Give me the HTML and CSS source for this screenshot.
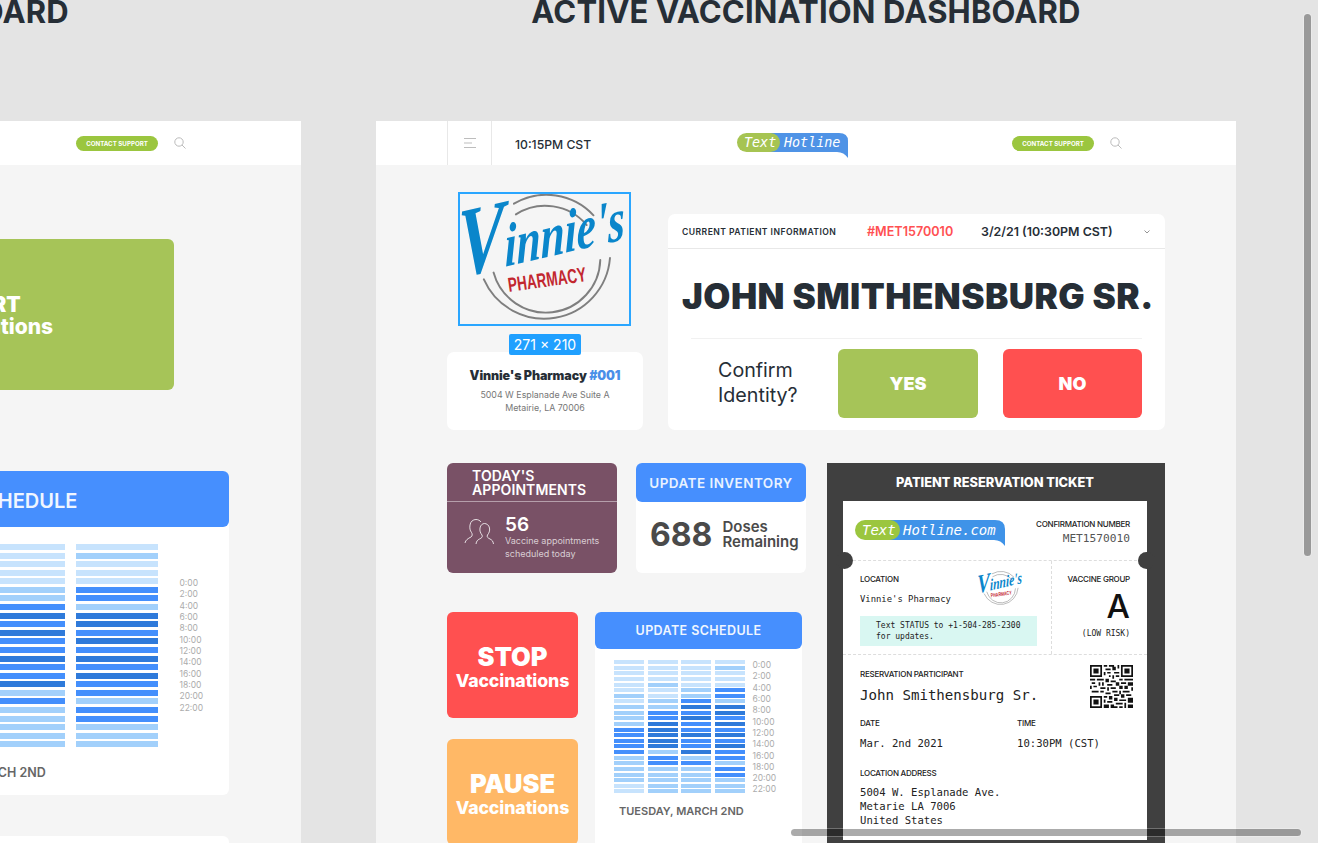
FILE: index.html
```html
<!DOCTYPE html>
<html lang="en">
<head>
<meta charset="utf-8">
<title>Vaccination Dashboards</title>
<link rel="stylesheet" href="styles.css">
</head>
<body>
<svg class="defs" width="0" height="0" aria-hidden="true">
  <symbol id="vinnie" viewBox="0 0 173 134">
    <g fill="none" stroke="#7f7f7f" stroke-width="2" stroke-linecap="round">
      <path d="M55 10A66 66 0 0 1 137 22"/>
      <path d="M57 21A56 56 0 0 1 130 32"/>
      <path d="M24 88A68 68 0 0 0 154 66"/>
      <path d="M34 81A56 56 0 0 0 144 68"/>
    </g>
    <text class="logo-script" transform="translate(-2 86) rotate(-13) skewX(-12)" textLength="176" lengthAdjust="spacingAndGlyphs"><tspan font-size="100">V</tspan>innie's</text>
    <text class="logo-pharm" transform="translate(50 101) rotate(-8)" textLength="81" lengthAdjust="spacingAndGlyphs">PHARMACY</text>
  </symbol>
</svg>

<main class="canvas">
  <section class="board board-left">
    <h1 class="board-title">SCHEDULED DASHBOARD</h1>
    <div class="artboard">
      <header class="topbar topbar-end">
        <span class="support">CONTACT SUPPORT</span>
        <svg class="search" viewBox="0 0 12 12"><circle cx="5" cy="5" r="4.2"/><path d="M8 8l3.500 3.500"/></svg>
      </header>
      <div class="left-hero"><p class="left-hero-text">START<br><span>Vaccinations</span></p></div>
      <div class="schedule schedule-left">
        <h2 class="schedule-head schedule-head-left">UPDATE SCHEDULE</h2>
        <div class="schedule-body">
          <div class="heat heat-left">
            <i class="h0"></i><i class="h0"></i><i class="h0"></i><i class="h1"></i><i class="h0"></i><i class="h0"></i><i class="h0"></i><i class="h0"></i><i class="h0"></i><i class="h0"></i>
            <i class="h1"></i><i class="h2"></i><i class="h1"></i><i class="h2"></i><i class="h2"></i><i class="h1"></i><i class="h3"></i><i class="h3"></i><i class="h2"></i><i class="h3"></i>
            <i class="h3"></i><i class="h2"></i><i class="h2"></i><i class="h3"></i><i class="h2"></i><i class="h2"></i><i class="h3"></i><i class="h3"></i><i class="h2"></i><i class="h2"></i>
            <i class="h2"></i><i class="h3"></i><i class="h3"></i><i class="h2"></i><i class="h1"></i><i class="h2"></i><i class="h2"></i><i class="h1"></i><i class="h1"></i><i class="h2"></i>
            <i class="h1"></i><i class="h2"></i><i class="h1"></i><i class="h1"></i><i class="h1"></i><i class="h1"></i><i class="h1"></i><i class="h1"></i>
          </div>
          <div class="times times-left">
            <span>0:00</span><span>2:00</span><span>4:00</span><span>6:00</span><span>8:00</span><span>10:00</span><span>12:00</span><span>14:00</span><span>16:00</span><span>18:00</span><span>20:00</span><span>22:00</span>
          </div>
        </div>
        <p class="schedule-date schedule-date-left">TUESDAY, MARCH 2ND</p>
      </div>
      <div class="left-next"></div>
    </div>
  </section>

  <section class="board board-right">
    <h1 class="board-title">ACTIVE VACCINATION DASHBOARD</h1>
    <div class="artboard">
      <header class="topbar">
        <div class="menu-cell">
          <svg class="menu" viewBox="0 0 12 10"><path d="M0 .5h12M0 5h8M0 9.500h12"/></svg>
        </div>
        <span class="clock">10:15PM CST</span>
        <svg class="brand" viewBox="0 0 111 25">
          <path class="brand-blue" d="M20 0H102Q111 0 111 8V25Q107 19 100 19H20Z"/>
          <rect class="brand-green" width="43" height="19" rx="9.500"/>
          <text class="brand-text" x="7" y="14">Text</text>
          <text class="brand-text" x="47" y="14">Hotline</text>
        </svg>
        <span class="support support-right">CONTACT SUPPORT</span>
        <svg class="search" viewBox="0 0 12 12"><circle cx="5" cy="5" r="4.2"/><path d="M8 8l3.500 3.500"/></svg>
      </header>

      <div class="content">
        <div class="row-top">
          <div class="pharmacy">
            <div class="selection">
              <svg class="selection-logo"><use href="#vinnie"/></svg>
              <span class="size-tag">271 × 210</span>
            </div>
            <div class="pharmacy-card">
              <p class="pharmacy-name">Vinnie's Pharmacy <b>#001</b></p>
              <p class="pharmacy-address">5004 W Esplanade Ave Suite A<br>Metairie, LA 70006</p>
            </div>
          </div>

          <div class="patient">
            <div class="patient-bar">
              <span class="patient-label">CURRENT PATIENT INFORMATION</span>
              <span class="patient-id">#MET1570010</span>
              <span class="patient-date">3/2/21 (10:30PM CST)</span>
              <svg class="chevron" viewBox="0 0 6 4"><path d="M.5 .5L3 3L5.500 .5"/></svg>
            </div>
            <h2 class="patient-name">JOHN SMITHENSBURG SR.</h2>
            <div class="confirm">
              <p class="confirm-text">Confirm<br>Identity?</p>
              <button class="answer answer-yes">YES</button>
              <button class="answer answer-no">NO</button>
            </div>
          </div>
        </div>

        <div class="row-bottom">
          <div class="col-left">
            <div class="stats">
              <div class="appts">
                <h3 class="appts-title">TODAY'S<br>APPOINTMENTS</h3>
                <div class="appts-body">
                  <svg class="people" viewBox="0 0 30 27">
                    <path d="M1 25c.5-3 3-4.500 6-6 1.500-1 1.500-3 .5-4.500C6 12.500 5.500 10 6 7c.5-3.500 3-5.500 6-5.500 2 0 4 1 5 2.500"/>
                    <path d="M12 26c.5-3 1.500-4 3.500-5 2-1 3.500-2 2.500-4-1.500-2-2.500-4-2-7 .5-3 2.500-4.500 4.500-4.500s4.500 1.500 5 4.500c.5 3-.5 5-2 7-1 2 .5 3 2.500 4 2 1 3 2 3.500 5"/>
                  </svg>
                  <div>
                    <p class="appts-count">56</p>
                    <p class="appts-note">Vaccine appointments<br>scheduled today</p>
                  </div>
                </div>
              </div>
              <div class="inventory">
                <h3 class="inventory-head">UPDATE INVENTORY</h3>
                <div class="inventory-body">
                  <span class="inventory-count">688</span>
                  <span class="inventory-label">Doses<br>Remaining</span>
                </div>
              </div>
            </div>

            <div class="controls">
              <div class="actions">
                <div class="action action-stop"><strong>STOP</strong><span>Vaccinations</span></div>
                <div class="action action-pause"><strong>PAUSE</strong><span>Vaccinations</span></div>
              </div>
              <div class="schedule schedule-right">
                <h2 class="schedule-head">UPDATE SCHEDULE</h2>
                <div class="schedule-body schedule-body-right">
                  <div class="heat heat-right">
                    <i class="h0"></i><i class="h0"></i><i class="h0"></i><i class="h0"></i>
                    <i class="h0"></i><i class="h0"></i><i class="h0"></i><i class="h1"></i>
                    <i class="h0"></i><i class="h0"></i><i class="h0"></i><i class="h0"></i>
                    <i class="h0"></i><i class="h0"></i><i class="h0"></i><i class="h0"></i>
                    <i class="h0"></i><i class="h1"></i><i class="h0"></i><i class="h0"></i>
                    <i class="h0"></i><i class="h0"></i><i class="h1"></i><i class="h2"></i>
                    <i class="h1"></i><i class="h0"></i><i class="h1"></i><i class="h2"></i>
                    <i class="h0"></i><i class="h1"></i><i class="h2"></i><i class="h1"></i>
                    <i class="h1"></i><i class="h1"></i><i class="h3"></i><i class="h3"></i>
                    <i class="h1"></i><i class="h2"></i><i class="h2"></i><i class="h3"></i>
                    <i class="h1"></i><i class="h2"></i><i class="h3"></i><i class="h2"></i>
                    <i class="h1"></i><i class="h3"></i><i class="h2"></i><i class="h3"></i>
                    <i class="h2"></i><i class="h3"></i><i class="h2"></i><i class="h2"></i>
                    <i class="h2"></i><i class="h3"></i><i class="h3"></i><i class="h3"></i>
                    <i class="h2"></i><i class="h3"></i><i class="h2"></i><i class="h2"></i>
                    <i class="h2"></i><i class="h3"></i><i class="h2"></i><i class="h3"></i>
                    <i class="h2"></i><i class="h1"></i><i class="h3"></i><i class="h2"></i>
                    <i class="h1"></i><i class="h2"></i><i class="h1"></i><i class="h2"></i>
                    <i class="h1"></i><i class="h2"></i><i class="h2"></i><i class="h1"></i>
                    <i class="h1"></i><i class="h1"></i><i class="h1"></i><i class="h2"></i>
                    <i class="h1"></i><i class="h1"></i><i class="h1"></i><i class="h2"></i>
                    <i class="h1"></i><i class="h1"></i><i class="h1"></i><i class="h1"></i>
                    <i class="h0"></i><i class="h1"></i><i class="h1"></i><i class="h1"></i>
                    <i class="h0"></i><i class="h1"></i><i class="h1"></i><i class="h1"></i>
                  </div>
                  <div class="times">
                    <span>0:00</span><span>2:00</span><span>4:00</span><span>6:00</span><span>8:00</span><span>10:00</span><span>12:00</span><span>14:00</span><span>16:00</span><span>18:00</span><span>20:00</span><span>22:00</span>
                  </div>
                </div>
                <p class="schedule-date">TUESDAY, MARCH 2ND</p>
              </div>
            </div>
          </div>

          <div class="ticket">
            <h3 class="ticket-title">PATIENT RESERVATION TICKET</h3>
            <div class="stub">
              <i class="notch notch-l"></i><i class="notch notch-r"></i>
              <div class="stub-head">
                <svg class="stub-brand" viewBox="0 0 150 26">
                  <path class="stub-blue" d="M25 0H140Q150 0 150 9V26Q146 20 139 20H25Z"/>
                  <rect class="stub-green" width="45" height="20" rx="10"/>
                  <text class="stub-text" x="7" y="15">Text</text>
                  <text class="stub-text" x="48" y="15">Hotline.com</text>
                </svg>
                <div class="stub-conf">
                  <p class="tlabel">CONFIRMATION NUMBER</p>
                  <p class="tvalue tvalue-conf">MET1570010</p>
                </div>
              </div>
              <div class="stub-mid">
                <div class="stub-loc">
                  <svg class="stub-logo"><use href="#vinnie"/></svg>
                  <p class="tlabel">LOCATION</p>
                  <p class="tvalue tvalue-loc">Vinnie's Pharmacy</p>
                  <p class="stub-note">Text STATUS to +1-504-285-2300<br>for updates.</p>
                </div>
                <div class="stub-group">
                  <p class="tlabel">VACCINE GROUP</p>
                  <p class="group-letter">A</p>
                  <p class="group-risk">(LOW RISK)</p>
                </div>
              </div>
              <div class="stub-low">
                <svg class="qr" viewBox="0 0 25 25">
                  <path fill-rule="evenodd" d="M0 0h7v7h-7zM1 1v5h5v-5zM2 2h3v3h-3zM18 0h7v7h-7zM19 1v5h5v-5zM20 2h3v3h-3zM0 18h7v7h-7zM1 19v5h5v-5zM2 20h3v3h-3z"/>
                  <path d="M8 0h2v1h-2zM11 0h3v1h-3zM16 0h1v2h-1zM9 2h3v1h-3zM13 1h2v2h-2zM8 4h1v2h-1zM10 4h2v1h-2zM14 4h3v1h-3zM11 6h1v1h-1zM13 6h1v2h-1zM15 6h2v1h-2zM0 8h3v1h-3zM4 8h4v1h-4zM9 8h2v2h-2zM12 9h3v1h-3zM17 8h2v1h-2zM20 8h5v1h-5zM1 10h2v1h-2zM5 10h1v2h-1zM7 10h1v2h-1zM10 11h3v1h-3zM15 10h2v2h-2zM18 10h3v1h-3zM22 10h3v2h-3zM0 12h1v2h-1zM2 12h2v1h-2zM6 13h3v1h-3zM10 13h1v2h-1zM12 13h3v1h-3zM17 12h2v2h-2zM20 12h2v2h-2zM24 13h1v2h-1zM1 15h4v1h-4zM6 15h2v1h-2zM9 16h3v1h-3zM13 15h3v1h-3zM17 15h1v2h-1zM19 15h4v1h-4zM8 18h2v1h-2zM11 18h2v2h-2zM14 17h3v1h-3zM18 17h2v2h-2zM21 17h3v1h-3zM8 20h1v2h-1zM10 21h3v1h-3zM14 19h2v2h-2zM17 20h4v1h-4zM22 19h3v3h-3zM8 23h3v2h-3zM12 23h2v1h-2zM15 22h4v1h-4zM20 22h1v3h-1zM13 25h-1v-1h4v1zM17 24h2v1h-2zM22 23h3v2h-3z"/>
                </svg>
                <p class="tlabel">RESERVATION PARTICIPANT</p>
                <p class="tvalue tvalue-name">John Smithensburg Sr.</p>
                <div class="stub-when">
                  <div><p class="tlabel">DATE</p><p class="tvalue tvalue-mid">Mar. 2nd 2021</p></div>
                  <div><p class="tlabel">TIME</p><p class="tvalue tvalue-mid">10:30PM (CST)</p></div>
                </div>
                <p class="tlabel tlabel-address">LOCATION ADDRESS</p>
                <p class="tvalue tvalue-address">5004 W. Esplanade Ave.<br>Metarie LA 7006<br>United States</p>
              </div>
            </div>
          </div>
        </div>
      </div>
    </div>
  </section>

  <div class="scroll scroll-v"></div>
  <div class="scroll scroll-h"></div>
</main>
</body>
</html>
```

FILE: styles.css
```css
* { box-sizing: border-box; }
html, body { margin: 0; padding: 0; height: 100%; overflow: hidden; }
body { font-family: Inter, "Liberation Sans", sans-serif; color: #262e36; }
p, h1, h2, h3 { margin: 0; font-weight: inherit; }
.defs { position: absolute; }

.canvas { position: relative; width: 1318px; height: 843px; overflow: hidden; background: #e4e4e4; }
.board { position: absolute; top: 0; width: 860px; }
.board-left { left: -559px; }
.board-right { left: 376px; }
.board-title { height: 121px; line-height: 23px; font-size: 31px; font-weight: 700; text-align: center; letter-spacing: .15px; white-space: nowrap; color: #262e36; }
.artboard { height: 722px; background: #f5f5f5; overflow: hidden; }

.topbar { display: flex; align-items: center; height: 44px; padding-left: 71px; background: #fff; }
.topbar-end { justify-content: flex-end; padding-right: 115px; }
.menu-cell { display: flex; align-items: center; justify-content: center; width: 45px; height: 44px; border-left: 1px solid #e8e8e8; border-right: 1px solid #e8e8e8; }
.menu { width: 12px; height: 10px; fill: none; stroke: #bdbdbd; stroke-width: 1; }
.clock { margin: 2px 0 0 23px; width: 77px; font-size: 12.200px; font-weight: 500; white-space: nowrap; }
.brand { margin: 5px 0 0 145px; width: 111px; height: 25px; }
.brand-blue { fill: #4f93e6; }
.brand-green { fill: #a6c452; }
.brand-text { font: oblique 13.400px "DejaVu Sans Mono", monospace; fill: #fff; }
.support { display: block; width: 82px; height: 15px; line-height: 15px; border-radius: 8px; background: #9bc63f; color: #fff; font-size: 6.200px; font-weight: 700; text-align: center; white-space: nowrap; }
.support-right { margin-left: 164px; }
.search { width: 12px; height: 12px; margin-left: 16px; fill: none; stroke: #bbb; stroke-width: 1; }

.content { padding: 27px 71px 0; }
.row-top { display: flex; align-items: flex-end; gap: 25px; }
.pharmacy { width: 196px; }
.selection { position: relative; width: 173px; height: 134px; margin-left: 11px; border: 2px solid #2aa6ff; }
.selection-logo { display: block; width: 169px; height: 130px; }
.logo-script { font: italic 700 62px "Liberation Serif", serif; fill: #0a86cb; }
.logo-pharm { font: 700 21px "Liberation Sans", sans-serif; fill: #c2272f; }
.size-tag { position: absolute; left: 49px; top: 140px; z-index: 2; width: 72px; height: 21px; line-height: 21px; border-radius: 2px; background: #20a0ff; color: #fff; font-size: 14px; text-align: center; white-space: nowrap; }
.pharmacy-card { margin-top: 26px; height: 78px; padding-top: 16px; border-radius: 7px; background: #fff; text-align: center; }
.pharmacy-name { font-size: 12.500px; line-height: 15px; font-weight: 900; letter-spacing: -.1px; white-space: nowrap; }
.pharmacy-name b { color: #4a8fe8; font-weight: 900; }
.pharmacy-address { margin-top: 6px; font-size: 8.850px; line-height: 12.500px; color: #777; }

.patient { width: 497px; height: 216px; border-radius: 7px; background: #fff; }
.patient-bar { display: flex; align-items: center; height: 35px; padding: 1px 14px 0; border-bottom: 1px solid #e8e8e8; white-space: nowrap; }
.patient-label { width: 185px; font-size: 8.600px; font-weight: 600; letter-spacing: .45px; }
.patient-id { width: 114px; font-size: 12.600px; font-weight: 600; color: #ff5052; }
.patient-date { width: 160px; font-size: 12.400px; font-weight: 600; }
.chevron { width: 6px; height: 4px; margin-left: 3px; fill: none; stroke: #777; stroke-width: .8; }
.patient-name { height: 54px; margin: 25px 0 0 14px; font-size: 35px; line-height: 44px; font-weight: 900; white-space: nowrap; letter-spacing: .45px; }
.confirm { display: flex; align-items: stretch; margin: 10px 23px 0; padding-top: 10px; height: 80px; border-top: 1.500px solid #f1f1f1; }
.confirm-text { width: 147px; padding: 9px 0 0 27px; font-size: 19.700px; line-height: 25px; }
.answer { width: 140px; height: 69px; padding: 0; border: 0; border-radius: 6px; color: #fff; font: 900 18px Inter, sans-serif; }
.answer-yes { background: #a6c458; }
.answer-no { width: 139px; margin-left: 25px; background: #ff5050; }

.row-bottom { display: flex; gap: 21px; margin-top: 33px; }
.col-left { width: 359px; }
.stats { display: flex; gap: 19px; height: 110px; }
.appts { width: 170px; border-radius: 6px; background: #795166; color: #fff; }
.appts-title { height: 39px; padding: 6px 0 0 25px; border-bottom: 1px solid rgba(255,255,255,.45); font-size: 14px; line-height: 14px; font-weight: 600; letter-spacing: .1px; white-space: nowrap; }
.appts-body { display: flex; gap: 11px; padding: 12px 0 0 17px; }
.people { width: 30px; height: 27px; margin-top: 4px; fill: none; stroke: #fff; stroke-width: .8; flex: none; }
.appts-count { font-size: 19px; line-height: 21px; font-weight: 600; }
.appts-note { margin-top: 0; font-size: 9px; line-height: 12.500px; color: rgba(255,255,255,.72); white-space: nowrap; }
.inventory { width: 170px; border-radius: 6px; background: #fff; }
.inventory-head { height: 38.500px; padding-top: 1px; line-height: 38.500px; border-radius: 6px; background: #468ffe; color: #e9f2ff; font-size: 13.500px; font-weight: 600; text-align: center; letter-spacing: .45px; white-space: nowrap; }
.inventory-body { display: flex; align-items: center; gap: 10px; height: 66px; padding: 0 0 1px 14px; color: #4a4a4a; }
.inventory-count { font-size: 32px; font-weight: 700; }
.inventory-label { font-size: 15px; line-height: 15px; font-weight: 600; white-space: nowrap; }

.controls { display: flex; gap: 17px; margin-top: 39px; }
.actions { display: flex; flex-direction: column; gap: 21px; width: 131px; }
.action { display: flex; flex-direction: column; align-items: center; justify-content: center; height: 106px; padding-top: 5px; border-radius: 6px; color: #fff; }
.action strong { font-size: 25.500px; line-height: 28px; font-weight: 900; }
.action span { margin-top: -1px; font-size: 17.700px; line-height: 22px; font-weight: 800; letter-spacing: -.1px; white-space: nowrap; }
.action-stop { background: #ff5050; }
.action-pause { background: #ffb866; }

.schedule { border-radius: 6px; background: #fff; }
.schedule-right { width: 207px; height: 240px; }
.schedule-head { height: 37px; line-height: 37px; border-radius: 6px; background: #468ffe; color: #f0f6ff; font-size: 12.500px; font-weight: 600; text-align: center; letter-spacing: .4px; white-space: nowrap; }
.schedule-body { display: flex; }
.schedule-body-right { padding: 11px 0 0 19px; }
.heat { display: grid; flex: none; }
.heat i { display: block; }
.heat-right { grid-template-columns: repeat(4, 30px); grid-auto-rows: 4px; column-gap: 3.500px; row-gap: 1.630px; }
.heat-left { grid-template-columns: repeat(2, 82px); grid-auto-rows: 6px; column-gap: 10.500px; row-gap: 2.580px; }
.h0 { background: #c7e3fd; }
.h1 { background: #a2d0fb; }
.h2 { background: #448ffc; }
.h3 { background: #2f7ada; }
.times { display: flex; flex-direction: column; margin-left: 8px; font-size: 8.500px; line-height: 11.320px; color: #ababab; }
.times span { display: block; }
.schedule-date { margin: 8px 0 0 24px; font-size: 11px; line-height: 14px; font-weight: 600; color: #666; white-space: nowrap; }

.left-hero { display: flex; align-items: center; justify-content: center; width: 378px; height: 151px; margin: 74px 0 0 355px; padding-top: 2px; border-radius: 6px; background: #a6c458; color: #fff; }
.left-hero-text { font-size: 21px; line-height: 22px; font-weight: 900; text-align: center; white-space: nowrap; }
.left-hero-text span { font-size: 21px; font-weight: 800; }
.schedule-left { width: 495px; height: 324px; margin: 81px 0 0 293px; }
.schedule-head-left { height: 56px; padding-top: 2px; line-height: 56px; font-size: 20px; letter-spacing: 0; }
.schedule-left .schedule-body { padding: 17px 0 0 249px; }
.times-left { margin: 34px 0 0 22px; line-height: 11.350px; }
.schedule-date-left { margin: 19px 0 0 170px; font-size: 12.500px; }
.left-next { width: 495px; height: 60px; margin: 41px 0 0 293px; border-radius: 6px; background: #fff; }

.ticket { width: 338px; height: 400px; padding: 0 18px 0 16px; background: #404040; }
.ticket-title { height: 38px; line-height: 39px; color: #fff; font-size: 12.800px; font-weight: 800; text-align: center; white-space: nowrap; }
.stub { position: relative; height: 339px; background: #fff; color: #222; }
.notch { position: absolute; top: 51px; width: 17px; height: 17px; border-radius: 50%; background: #404040; }
.notch-l { left: -7px; }
.notch-r { right: -8px; }
.stub-head { display: flex; justify-content: space-between; height: 60px; padding: 19px 17px 0 12px; border-bottom: 1px dashed #ddd; }
.stub-brand { width: 150px; height: 26px; }
.stub-blue { fill: #3f93e8; }
.stub-green { fill: #9bc63f; }
.stub-text { font: oblique 14px "DejaVu Sans Mono", monospace; fill: #fff; }
.stub-conf { text-align: right; }
.tlabel { font-size: 8px; line-height: 9px; font-weight: 500; letter-spacing: -.25px; white-space: nowrap; }
.tvalue { font-family: "DejaVu Sans Mono", monospace; white-space: nowrap; }
.tvalue-conf { margin-top: 3px; font-size: 11.200px; line-height: 14px; color: #555; }
.stub-mid { display: flex; height: 94px; border-bottom: 1px dashed #ddd; }
.stub-loc { position: relative; width: 209px; padding: 14px 0 0 17px; border-right: 1px dashed #ddd; }
.stub-logo { position: absolute; left: 135px; top: 10px; width: 45px; height: 35px; }
.tvalue-loc { margin-top: 10px; font-size: 8.900px; line-height: 11px; }
.stub-note { width: 177px; height: 30px; margin-top: 11px; padding: 4px 0 0 16px; background: #d9f7f2; font: 8px/11px "DejaVu Sans Mono", monospace; white-space: nowrap; }
.stub-group { flex: 1; padding: 14px 17px 0 0; text-align: right; }
.group-letter { margin-top: 3px; font-size: 33px; line-height: 38px; font-weight: 500; color: #111; }
.group-risk { margin-top: 3px; font: 8px/11px "DejaVu Sans Mono", monospace; }
.stub-low { position: relative; padding: 15px 0 0 17px; }
.qr { position: absolute; top: 10px; right: 14px; width: 43px; height: 43px; fill: #111; }
.tvalue-name { margin-top: 8px; font-size: 14.100px; line-height: 17px; }
.stub-when { display: flex; margin-top: 15px; }
.stub-when > div { flex: none; width: 157px; }
.tvalue-mid { margin-top: 8px; font-size: 10.600px; line-height: 14px; }
.tlabel-address { margin-top: 19px; }
.tvalue-address { margin-top: 7px; font-size: 10.600px; line-height: 14px; }

.scroll { position: absolute; z-index: 5; border-radius: 4px; background: rgba(0,0,0,.33); box-shadow: 0 0 0 1px rgba(255,255,255,.25); }
.scroll-v { left: 1304px; top: 14px; width: 7px; height: 542px; }
.scroll-h { left: 791px; top: 829px; width: 510px; height: 7px; }
```
